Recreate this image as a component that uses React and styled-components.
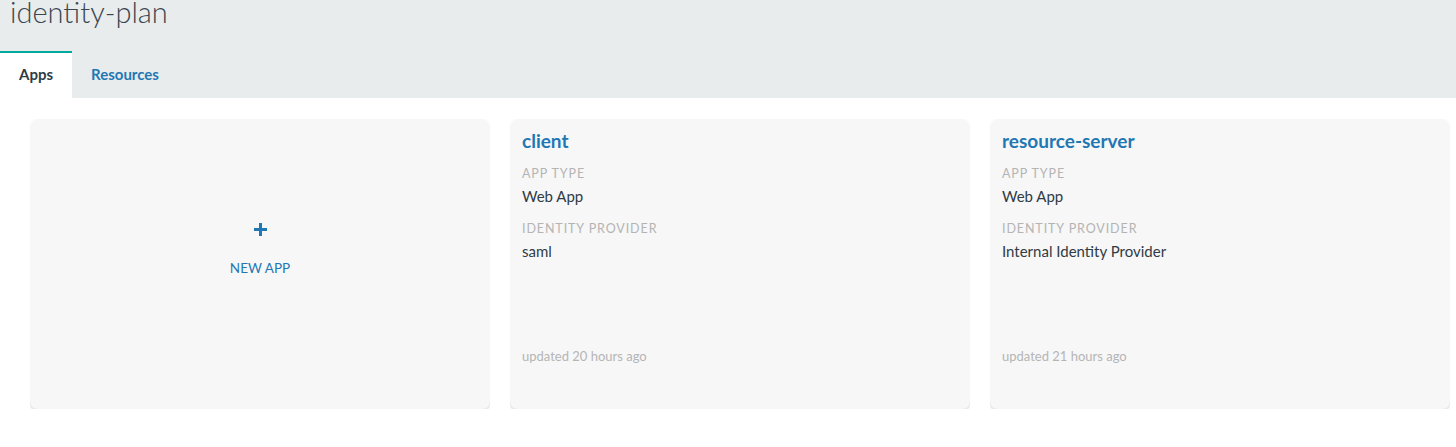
import React from "react";
import styled, { createGlobalStyle } from "styled-components";

const GlobalStyle = createGlobalStyle`
  body {
    margin: 0;
    background: #ffffff;
    font-family: Lato, "Open Sans", sans-serif;
  }
`;

const Header = styled.div`
  background: #e9eced;
  display: flex;
  flex-direction: column;
`;

const PageTitle = styled.h1`
  margin: 0;
  padding: 0 0 0 10px;
  height: 51px;
  font-size: 29px;
  font-weight: 300;
  line-height: 24px;
  color: #3a4750;
`;

const Tabs = styled.div`
  display: flex;
  height: 47px;
`;

const Tab = styled.div`
  display: flex;
  align-items: center;
  padding: 0 19px 3px;
  font-size: 15px;
  font-weight: 700;
  color: ${(p) => (p.active ? "#2f3b45" : "#1f78b4")};
  background: ${(p) => (p.active ? "#ffffff" : "transparent")};
  border-top: 2px solid ${(p) => (p.active ? "#00a99d" : "transparent")};
  box-sizing: border-box;
`;

const Grid = styled.div`
  display: grid;
  grid-template-columns: repeat(3, 460px);
  gap: 20px;
  padding: 21px 6px 0 30px;
`;

const Card = styled.div`
  background: #f7f7f7;
  border-radius: 8px;
  height: 290px;
  box-shadow: 0 3px 0 #e9e9e9;
  box-sizing: border-box;
  display: flex;
  flex-direction: column;
  padding: ${(p) => (p.center ? "104px 0 0" : "10px 12px 0")};
  align-items: ${(p) => (p.center ? "center" : "stretch")};
`;

const Plus = styled.svg`
  display: block;
  width: 13px;
  height: 13px;
`;

const NewLabel = styled.div`
  color: #1f78b4;
  font-size: 13.5px;
  line-height: 16px;
  margin-top: 24px;
`;

const AppName = styled.div`
  color: #1f78b4;
  font-size: 19px;
  font-weight: 700;
  line-height: 24px;
`;

const FieldLabel = styled.div`
  color: #b4b4b4;
  font-size: 12.5px;
  letter-spacing: 0.9px;
  text-transform: uppercase;
  line-height: 16px;
  margin-top: ${(p) => p.gap}px;
`;

const FieldValue = styled.div`
  color: #2f3b45;
  font-size: 15px;
  line-height: 20px;
  margin-top: 4px;
`;

const Updated = styled.div`
  color: #b5b5b5;
  font-size: 13px;
  line-height: 18px;
  margin-top: 86px;
`;

const apps = [
  { name: "client", type: "Web App", idp: "saml", updated: "updated 20 hours ago" },
  {
    name: "resource-server",
    type: "Web App",
    idp: "Internal Identity Provider",
    updated: "updated 21 hours ago",
  },
];

const App = () => {
  return (
    <>
      <GlobalStyle />
      <Header>
        <PageTitle>identity-plan</PageTitle>
        <Tabs>
          <Tab active>Apps</Tab>
          <Tab>Resources</Tab>
        </Tabs>
      </Header>
      <Grid>
        <Card center>
          <Plus viewBox="0 0 13 13">
            <rect x="5" y="0" width="3" height="13" fill="#1f78b4" />
            <rect x="0" y="5" width="13" height="3" fill="#1f78b4" />
          </Plus>
          <NewLabel>NEW APP</NewLabel>
        </Card>
        {apps.map((a) => (
          <Card key={a.name}>
            <AppName>{a.name}</AppName>
            <FieldLabel gap={13}>App type</FieldLabel>
            <FieldValue>{a.type}</FieldValue>
            <FieldLabel gap={15}>Identity provider</FieldLabel>
            <FieldValue>{a.idp}</FieldValue>
            <Updated>{a.updated}</Updated>
          </Card>
        ))}
      </Grid>
    </>
  );
};

export default App;
